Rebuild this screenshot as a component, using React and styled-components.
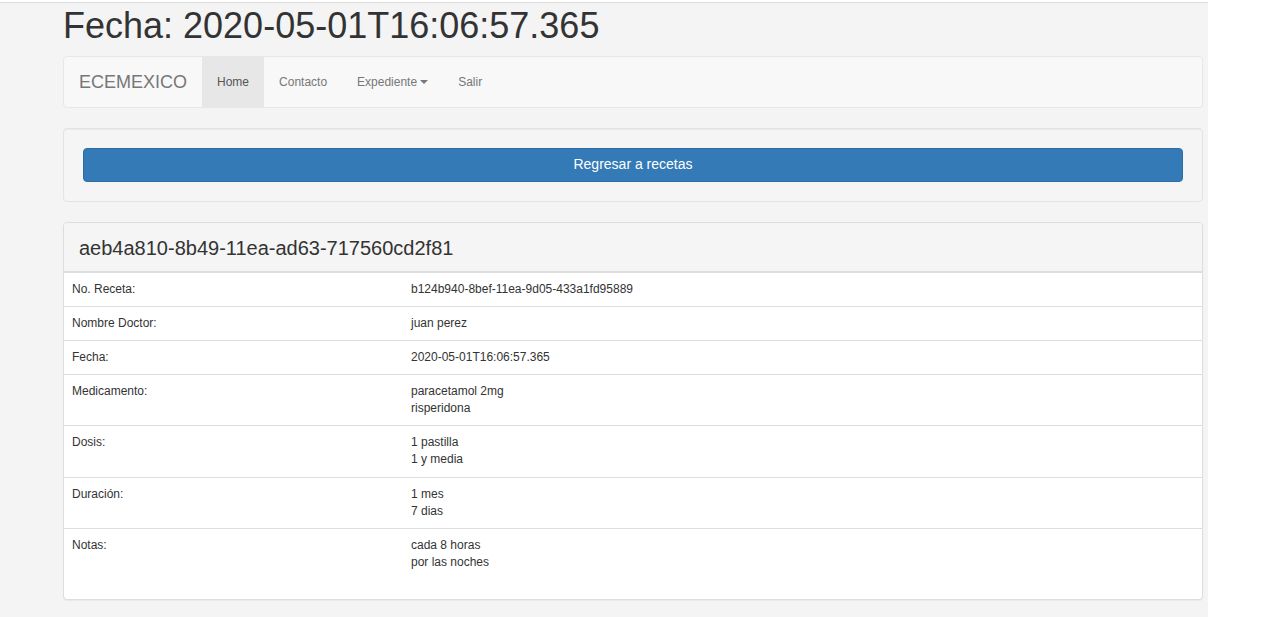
import React from 'react'
import styled, { createGlobalStyle } from 'styled-components'

const GlobalStyle = createGlobalStyle`
  html, body {
    margin: 0;
    padding: 0;
    background: #ffffff;
  }
  body {
    font-family: "Liberation Sans", Arial, Helvetica, sans-serif;
    font-size: 14px;
    line-height: 1.42857;
    color: #333;
  }
  * {
    box-sizing: border-box;
  }
`

const receta = [
  { label: 'No. Receta:', values: ['b124b940-8bef-11ea-9d05-433a1fd95889'] },
  { label: 'Nombre Doctor:', values: ['juan perez'] },
  { label: 'Fecha:', values: ['2020-05-01T16:06:57.365'] },
  { label: 'Medicamento:', values: ['paracetamol 2mg', 'risperidona'] },
  { label: 'Dosis:', values: ['1 pastilla', '1 y media'] },
  { label: 'Duración:', values: ['1 mes', '7 dias'] },
  { label: 'Notas:', values: ['cada 8 horas', 'por las noches'] },
]

const App = () => {
  return (
    <>
      <GlobalStyle />
      <Page>
        <Screen>
          <Container>
            <Title>Fecha: 2020-05-01T16:06:57.365</Title>

            <Navbar>
              <Brand>ECEMEXICO</Brand>
              <NavList>
                <NavItem active>Home</NavItem>
                <NavItem>Contacto</NavItem>
                <NavItem>
                  Expediente <Caret />
                </NavItem>
                <NavItem>Salir</NavItem>
              </NavList>
            </Navbar>

            <Well>
              <PrimaryButton>Regresar a recetas</PrimaryButton>
            </Well>

            <Panel>
              <PanelHeading>
                <PanelTitle>aeb4a810-8b49-11ea-ad63-717560cd2f81</PanelTitle>
              </PanelHeading>
              <Table>
                <colgroup>
                  <col style={{ width: 339 }} />
                  <col />
                </colgroup>
                <tbody>
                  {receta.map((row) => (
                    <Row key={row.label}>
                      <Cell>{row.label}</Cell>
                      <Cell>
                        {row.values.map((v) => (
                          <div key={v}>{v}</div>
                        ))}
                      </Cell>
                    </Row>
                  ))}
                </tbody>
              </Table>
              <PanelSpacer />
            </Panel>
          </Container>
        </Screen>
      </Page>
    </>
  )
}

const Page = styled.div`
  padding-top: 2px;
  min-height: 617px;
  background: #ffffff;
`

const Screen = styled.div`
  width: 1208px;
  min-height: 615px;
  background: #f4f4f4;
  border-top: 1px solid #dcdcdc;
`

const Container = styled.div`
  width: 1140px;
  margin-left: 63px;
  padding-bottom: 16px;
`

const Title = styled.h1`
  margin: 3px 0 10px;
  font-size: 36px;
  font-weight: 400;
  line-height: 1.1;
  color: #333;
`

const Navbar = styled.nav`
  display: flex;
  align-items: stretch;
  height: 52px;
  margin-bottom: 20px;
  background: #f8f8f8;
  border: 1px solid #e7e7e7;
  border-radius: 4px;
`

const Brand = styled.a`
  padding: 15px;
  font-size: 18px;
  line-height: 20px;
  color: #777;
  text-decoration: none;
`

const NavList = styled.ul`
  display: flex;
  margin: 0;
  padding: 0;
  list-style: none;
`

const NavItem = styled.li`
  display: flex;
  align-items: center;
  padding: 15px;
  font-size: 12px;
  line-height: 20px;
  color: ${(p) => (p.active ? '#555' : '#777')};
  background: ${(p) => (p.active ? '#e7e7e7' : 'transparent')};
  cursor: pointer;
`

const Caret = styled.span`
  display: inline-block;
  width: 0;
  height: 0;
  margin-left: 3px;
  border-top: 4px solid #777;
  border-left: 4px solid transparent;
  border-right: 4px solid transparent;
`

const Well = styled.div`
  padding: 19px;
  margin-bottom: 20px;
  background: #f5f5f5;
  border: 1px solid #e3e3e3;
  border-radius: 4px;
  box-shadow: inset 0 1px 1px rgba(0, 0, 0, 0.05);
`

const PrimaryButton = styled.button`
  display: block;
  width: 100%;
  height: 34px;
  padding: 6px 12px;
  font-family: inherit;
  font-size: 14px;
  line-height: 1.42857;
  color: #fff;
  background: #337ab7;
  border: 1px solid #2e6da4;
  border-radius: 4px;
  cursor: pointer;
`

const Panel = styled.div`
  background: #fff;
  border: 1px solid #ddd;
  border-radius: 4px;
  box-shadow: 0 1px 1px rgba(0, 0, 0, 0.05);
  overflow: hidden;
`

const PanelHeading = styled.div`
  padding: 14px 15px 12px;
  background: #f5f5f5;
  border-bottom: 2px solid #ddd;
`

const PanelTitle = styled.h3`
  margin: 0;
  font-size: 20px;
  font-weight: 400;
  line-height: 1.1;
  color: #333;
`

const Table = styled.table`
  width: 100%;
  table-layout: fixed;
  border-collapse: collapse;
  font-size: 12px;
  line-height: 1.42857;
`

const Row = styled.tr`
  border-top: 1px solid #ddd;

  &:first-child {
    border-top: 0;
  }
`

const Cell = styled.td`
  padding: 8px;
  vertical-align: top;
  color: #333;
`

const PanelSpacer = styled.div`
  height: 20px;
`

export default App
